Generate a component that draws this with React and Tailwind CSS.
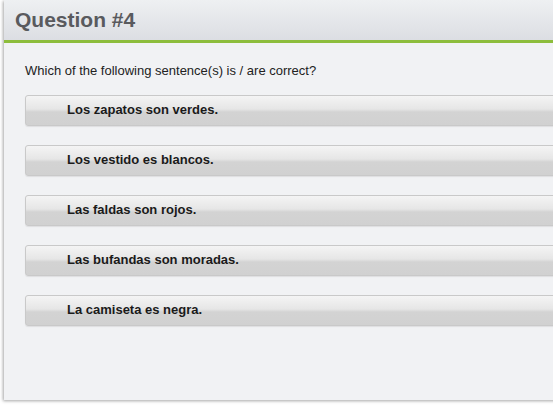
export default function App() {
  const options = [
    "Los zapatos son verdes.",
    "Los vestido es blancos.",
    "Las faldas son rojos.",
    "Las bufandas son moradas.",
    "La camiseta es negra.",
  ];
  return (
    <div className="w-[553px] h-[405px] overflow-hidden bg-white" style={{ fontFamily: '"Liberation Sans", Arial, sans-serif' }}>
      <div className="ml-[4px] w-[620px] h-[400px] bg-[#f1f2f4] shadow-[-1px_1px_3px_rgba(0,0,0,0.35)] flex flex-col">
        <div className="h-[40px] bg-gradient-to-b from-[#eef0f2] to-[#dcdee3] flex items-center pl-[11px]">
          <h1 className="text-[21px] font-bold text-[#595a5e] leading-none -mt-[1px]">Question #4</h1>
        </div>
        <div className="h-[3px] bg-[#8dbd3c]"></div>
        <div className="pt-[20px] pl-[21px] flex flex-col">
          <p className="text-[13px] leading-[15px] text-[#222]">Which of the following sentence(s) is / are correct?</p>
          <div className="mt-[17px] flex flex-col gap-[19px]">
            {options.map((o) => (
              <div
                key={o}
                className="h-[31px] rounded-l-[3px] border border-[#c9c9c9] bg-[linear-gradient(to_bottom,#f4f4f4_0%,#e6e6e6_45%,#d3d3d3_55%,#d1d1d1_100%)] shadow-[0_1px_1px_rgba(0,0,0,0.08)] flex items-center pl-[41px]"
              >
                <span className="text-[13px] font-bold text-[#1a1a1a] -mt-[1px]">{o}</span>
              </div>
            ))}
          </div>
        </div>
      </div>
    </div>
  );
}
